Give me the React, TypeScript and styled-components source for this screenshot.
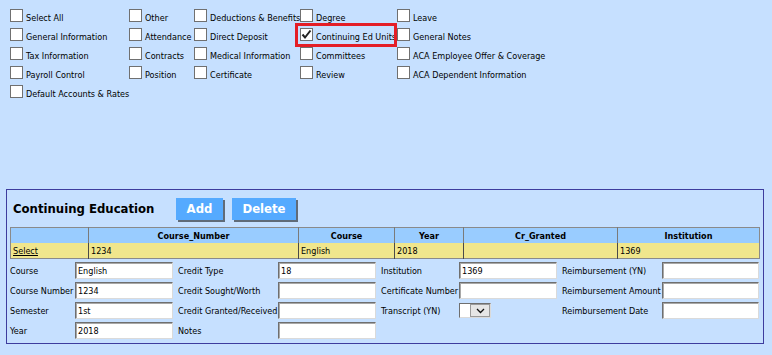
import React from 'react';
import styled, { createGlobalStyle } from 'styled-components';

const GlobalStyle = createGlobalStyle`
  body {
    margin: 0;
    background: #c6e0ff;
    font-family: "DejaVu Sans Condensed", "Liberation Sans Narrow", "Liberation Sans", sans-serif;
    font-size: 9px;
    color: #000;
  }
`;

const Page = styled.div`
  width: 772px;
  height: 355px;
  overflow: hidden;
`;

const CheckGrid = styled.div`
  display: grid;
  grid-template-columns: 119px 65px 106px 97px auto;
  grid-auto-rows: 19px;
  padding: 9px 0 0 10px;
`;

const CheckItem = styled.label<{ $highlight?: boolean }>`
  position: relative;
  display: flex;
  align-items: flex-start;
  white-space: nowrap;
  ${p => p.$highlight && `
    &::after {
      content: '';
      position: absolute;
      left: -5px;
      top: -5px;
      width: 96px;
      height: 18px;
      border: 3px solid #e41e26;
    }
  `}
`;

const Box = styled.span`
  flex: none;
  width: 11px;
  height: 11px;
  background: #fff;
  border: 1px solid #707070;
  margin-right: 3px;
  display: flex;
  align-items: center;
  justify-content: center;
`;

const CheckText = styled.span`
  line-height: 14px;
  margin-top: 2px;
`;

const Panel = styled.div`
  margin: 85px 8px 0 6px;
  border: 1px solid #3d3d9e;
  padding: 7px 2px 1px 3px;
`;

const PanelHead = styled.div`
  display: flex;
  align-items: center;
  padding-left: 3px;
  height: 23px;
`;

const Title = styled.h2`
  margin: 0;
  width: 163px;
  font-size: 13px;
  font-weight: bold;
  font-family: "DejaVu Sans Condensed", "Liberation Sans", sans-serif;
`;

const ActionButton = styled.button<{ $w: number }>`
  width: ${p => p.$w}px;
  height: 22px;
  margin-right: 9px;
  padding: 0;
  border: none;
  background: #55aaff;
  color: #fff;
  font-family: "DejaVu Sans Condensed", "Liberation Sans", sans-serif;
  font-size: 13px;
  font-weight: bold;
  box-shadow: 2px 2px 0 #606b78;
`;

const Grid = styled.table`
  margin-top: 7px;
  border-collapse: collapse;
  table-layout: fixed;
  border: 1px solid #8a8a8a;
`;

const Th = styled.th<{ $w: number }>`
  width: ${p => p.$w}px;
  height: 15px;
  padding: 0;
  background: #99ccff;
  border-left: 1px solid #7a7a7a;
  font-weight: bold;
  text-align: center;
  &:first-child { border-left: none; }
`;

const Td = styled.td`
  height: 15px;
  padding: 0 2px;
  background: #f0e68c;
  border-left: 1px solid #4a4a4a;
  overflow: hidden;
  &:first-child { border-left: none; }
  a { color: #000; }
`;

const Form = styled.div`
  display: grid;
  grid-template-columns: 65px 103px 100px 103px 78px 103px 100px 97px;
  grid-auto-rows: 20px;
  margin-top: 3px;
`;

const FieldLabel = styled.span`
  display: flex;
  align-items: center;
  height: 17px;
  white-space: nowrap;
`;

const Input = styled.div<{ $w?: number }>`
  box-sizing: border-box;
  width: ${p => p.$w ?? 98}px;
  height: 17px;
  background: #fff;
  border-style: solid;
  border-width: 1px;
  border-color: #6f6f6f #dadada #dadada #6f6f6f;
  box-shadow: inset 1px 1px 0 #a8a8a8;
  padding: 1px 2px 0;
  line-height: 14px;
`;

const SelectBox = styled.div`
  box-sizing: border-box;
  display: flex;
  width: 32px;
  height: 15px;
  margin-top: 1px;
  border-style: solid;
  border-width: 1px;
  border-color: #6f6f6f #dadada #dadada #6f6f6f;
  background: #fff;
`;

const SelectArrow = styled.span`
  margin-left: auto;
  width: 18px;
  background: #e6e6e6;
  border: 1px solid #9a9a9a;
  display: flex;
  align-items: center;
  justify-content: center;
`;

type Check = { label: string; checked?: boolean; highlight?: boolean } | null;

const checks: Check[] = [
  { label: 'Select All' }, { label: 'Other' }, { label: 'Deductions & Benefits' }, { label: 'Degree' }, { label: 'Leave' },
  { label: 'General Information' }, { label: 'Attendance' }, { label: 'Direct Deposit' }, { label: 'Continuing Ed Units', checked: true, highlight: true }, { label: 'General Notes' },
  { label: 'Tax Information' }, { label: 'Contracts' }, { label: 'Medical Information' }, { label: 'Committees' }, { label: 'ACA Employee Offer & Coverage' },
  { label: 'Payroll Control' }, { label: 'Position' }, { label: 'Certificate' }, { label: 'Review' }, { label: 'ACA Dependent Information' },
  { label: 'Default Accounts & Rates' },
];

// widths are content widths; every column but the first has a 1px left rule
const columns = [
  { title: '', w: 77 },
  { title: 'Course_Number', w: 209 },
  { title: 'Course', w: 95 },
  { title: 'Year', w: 68 },
  { title: 'Cr_Granted', w: 153 },
  { title: 'Institution', w: 141 },
];

type Field = { label: string; value?: string; select?: boolean } | null;

const fields: Field[] = [
  { label: 'Course', value: 'English' }, { label: 'Credit Type', value: '18' }, { label: 'Institution', value: '1369' }, { label: 'Reimbursement (YN)' },
  { label: 'Course Number', value: '1234' }, { label: 'Credit Sought/Worth' }, { label: 'Certificate Number' }, { label: 'Reimbursement Amount' },
  { label: 'Semester', value: '1st' }, { label: 'Credit Granted/Received' }, { label: 'Transcript (YN)', select: true }, { label: 'Reimbursement Date' },
  { label: 'Year', value: '2018' }, { label: 'Notes' }, null, null,
];

const Tick = () => (
  <svg width='11' height='11' viewBox='0 0 11 11'>
    <path d='M1.5 5.5 L4 8.5 L9.5 1.5' fill='none' stroke='#222' strokeWidth='2' />
  </svg>
);

const App = () => (
  <Page>
    <GlobalStyle />
    <CheckGrid>
      {checks.map((c, i) => c ? (
        <CheckItem key={i} $highlight={c.highlight}>
          <Box>{c.checked && <Tick />}</Box>
          <CheckText>{c.label}</CheckText>
        </CheckItem>
      ) : <span key={i} />)}
    </CheckGrid>
    <Panel>
      <PanelHead>
        <Title>Continuing Education</Title>
        <ActionButton $w={47}>Add</ActionButton>
        <ActionButton $w={64}>Delete</ActionButton>
      </PanelHead>
      <Grid>
        <thead>
          <tr>
            {columns.map(c => <Th key={c.title} $w={c.w}>{c.title}</Th>)}
          </tr>
        </thead>
        <tbody>
          <tr>
            <Td><a href='#'>Select</a></Td>
            <Td>1234</Td>
            <Td>English</Td>
            <Td>2018</Td>
            <Td></Td>
            <Td>1369</Td>
          </tr>
        </tbody>
      </Grid>
      <Form>
        {fields.map((f, i) => {
          if (!f) return [<span key={i + 'a'} />, <span key={i + 'b'} />];
          return [
            <FieldLabel key={i + 'a'}>{f.label}</FieldLabel>,
            f.select ? (
              <div key={i + 'b'}>
                <SelectBox>
                  <SelectArrow>
                    <svg width='9' height='6' viewBox='0 0 9 6'>
                      <path d='M1 1 L4.5 4.5 L8 1' fill='none' stroke='#111' strokeWidth='1.3' />
                    </svg>
                  </SelectArrow>
                </SelectBox>
              </div>
            ) : (
              <Input key={i + 'b'} $w={i % 4 === 3 ? 97 : 98}>{f.value}</Input>
            ),
          ];
        })}
      </Form>
    </Panel>
  </Page>
);

export default App;
